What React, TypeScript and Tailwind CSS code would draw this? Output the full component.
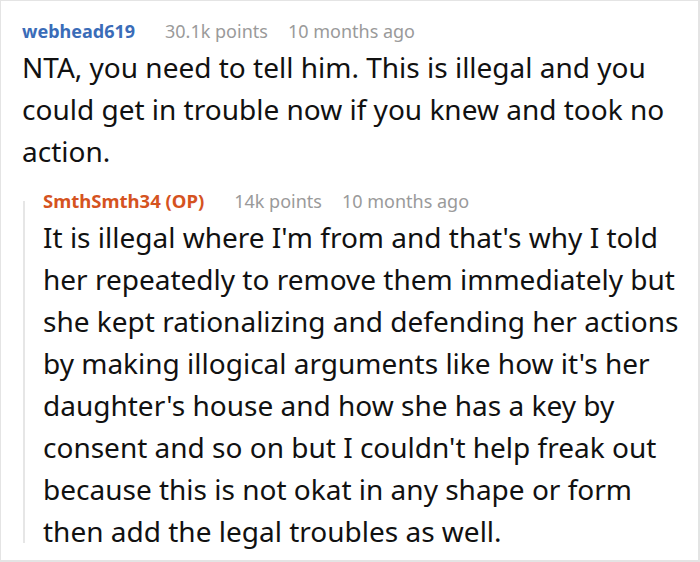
import React from "react";

export default function App() {
  const font = { fontFamily: '"Noto Sans", "Open Sans", sans-serif' };
  return (
    <div className="w-[700px] h-[562px] bg-white box-border border-t border-l border-r-2 border-b-2 border-[#e4e4e4] overflow-hidden" style={font}>
      <div className="pl-[21px] pr-3 pt-[17px]">
        <div className="flex items-baseline text-[18px] leading-[26px] whitespace-nowrap">
          <span className="font-bold text-[#3a6cb8]">webhead619</span>
          <span className="ml-[30px] text-[#9a9a9a]">30.1k points</span>
          <span className="ml-[20px] text-[#9a9a9a]">10 months ago</span>
        </div>
        <p className="mt-[2px] text-[28px] leading-[42px] text-[#111]">
          NTA, you need to tell him. This is illegal and you could get in trouble now if you knew and took no action.
        </p>
        <div className="mt-[16px] flex">
          <div className="ml-[1px] w-[2px] shrink-0 bg-[#e6e6e6] mt-[13px] mb-[9px]" />
          <div className="pl-[18px] flex-1">
            <div className="flex items-baseline text-[18px] leading-[26px] whitespace-nowrap">
              <span className="font-bold text-[#d5531f] text-[18.5px]">SmthSmth34 (OP)</span>
              <span className="ml-[30px] text-[#9a9a9a]">14k points</span>
              <span className="ml-[20px] text-[#9a9a9a]">10 months ago</span>
            </div>
            <p className="mt-[2px] text-[28px] leading-[42px] text-[#111]">
              It is illegal where I'm from and that's why I told her repeatedly to remove them immediately but she kept rationalizing and defending her actions by making illogical arguments like how it's her daughter's house and how she has a key by consent and so on but I couldn't help freak out because this is not okat in any shape or form then add the legal troubles as well.
            </p>
          </div>
        </div>
      </div>
    </div>
  );
}
